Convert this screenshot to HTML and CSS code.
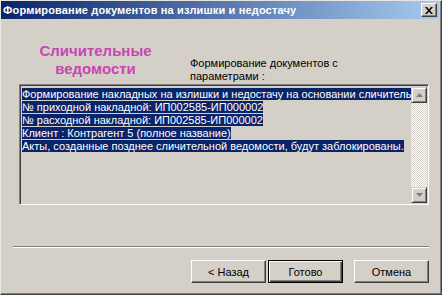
FILE: index.html
```html
<!DOCTYPE html>
<html lang="ru">
<head>
    <meta charset="UTF-8">
    <title>Формирование документов на излишки и недостачу</title>
    <link rel="stylesheet" href="styles.css">
</head>
<body>
    <div class="window">
        <!-- Title bar -->
        <div class="titlebar">
            <span class="title">Формирование документов на излишки и недостачу</span>
            <button class="close-btn">
                <svg width="8" height="7" viewBox="0 0 8 7"><path d="M0 0h2l2 2.5L6 0h2L5 3.5 8 7H6L4 4.5 2 7H0l3-3.5z" fill="#000"/></svg>
            </button>
        </div>

        <div class="content">
            <div class="header">
                <div class="page-title">Сличительные<br>ведомости</div>
                <div class="page-desc">Формирование документов с<br>параметрами :</div>
            </div>

            <div class="listbox">
                <div class="list-text">
                    <div class="row"><span>Формирование накладных на излишки и недостачу на основании сличительной ведомости</span></div>
                    <div class="row"><span>№ приходной накладной: ИП002585-ИП000002</span></div>
                    <div class="row"><span>№ расходной накладной: ИП002585-ИП000002</span></div>
                    <div class="row"><span>Клиент : Контрагент 5 (полное название)</span></div>
                    <div class="row"><span>Акты, созданные позднее сличительной ведомости, будут заблокированы.</span></div>
                </div>
                <div class="scrollbar">
                    <div class="sb-btn"><svg width="7" height="4" viewBox="0 0 7 4"><path d="M3.5 0L7 4H0z" fill="#808080"/></svg></div>
                    <div class="sb-track"></div>
                    <div class="sb-btn"><svg width="7" height="4" viewBox="0 0 7 4"><path d="M0 0h7L3.5 4z" fill="#808080"/></svg></div>
                </div>
            </div>

            <div class="separator"></div>

            <div class="buttons">
                <button class="btn">&lt; Назад</button>
                <button class="btn btn-default">Готово</button>
                <button class="btn btn-cancel">Отмена</button>
            </div>
        </div>
    </div>
</body>
</html>
```

FILE: styles.css
```css
body {
    margin: 0;
    font-family: "Liberation Sans", Arial, sans-serif;
    font-size: 11px;
    background: #d4d0c8;
}
.window {
    width: 442px;
    height: 295px;
    box-sizing: border-box;
    background: #d4d0c8;
    border-top: 1px solid #e8e6e0;
    border-left: 1px solid #e8e6e0;
    border-right: 1px solid #404040;
    border-bottom: 1px solid #404040;
    box-shadow: inset -1px -1px #808080;
    padding: 0 2px 2px 0;
    display: flex;
    flex-direction: column;
}
.titlebar {
    height: 18px;
    background: linear-gradient(to right, #0a246a, #a6caf0);
    display: flex;
    align-items: center;
    justify-content: space-between;
    padding: 0 2px 0 2px;
}
.title {
    color: #fff;
    font-weight: bold;
    font-size: 11px;
    letter-spacing: 0.15px;
}
.close-btn {
    width: 16px;
    height: 14px;
    padding: 0;
    background: #d4d0c8;
    border: 1px solid;
    border-color: #fff #404040 #404040 #fff;
    box-shadow: inset -1px -1px #808080;
    display: flex;
    align-items: center;
    justify-content: center;
}
.content {
    flex: 1;
    display: flex;
    flex-direction: column;
}
.header {
    display: flex;
    height: 65px;
}
.page-title {
    width: 189px;
    padding-top: 23px;
    text-align: center;
    color: #c846b4;
    font-weight: bold;
    font-size: 15px;
    line-height: 18px;
}
.page-desc {
    padding-top: 38px;
    line-height: 13px;
}
.listbox {
    margin-left: 18px;
    width: 410px;
    height: 121px;
    box-sizing: border-box;
    border: 1px solid;
    border-color: #808080 #fff #fff #808080;
    box-shadow: inset 1px 1px #404040;
    padding: 2px 1px 1px 2px;
    display: flex;
}
.list-text {
    flex: 1;
    overflow: hidden;
    white-space: nowrap;
    padding-top: 1px;
}
.row {
    height: 13px;
    line-height: 13px;
}
.row span {
    background: #0a246a;
    color: #fff;
}
.scrollbar {
    width: 16px;
    display: flex;
    flex-direction: column;
}
.sb-btn {
    height: 16px;
    box-sizing: border-box;
    background: #d4d0c8;
    border: 1px solid;
    border-color: #d4d0c8 #404040 #404040 #d4d0c8;
    box-shadow: inset 1px 1px #fff, inset -1px -1px #808080;
    display: flex;
    align-items: center;
    justify-content: center;
}
.sb-track {
    flex: 1;
    background: repeating-conic-gradient(#fff 0 25%, #d4d0c8 0 50%) 0 0 / 2px 2px;
}
.separator {
    margin: 41px 10px 0 12px;
    height: 1px;
    background: #808080;
    border-bottom: 1px solid #fff;
}
.buttons {
    display: flex;
    justify-content: flex-end;
    padding: 12px 10px 0 0;
    gap: 2px;
}
.btn {
    width: 75px;
    height: 23px;
    box-sizing: border-box;
    font-family: "Liberation Sans", Arial, sans-serif;
    font-size: 11px;
    background: #d4d0c8;
    color: #000;
    border: 1px solid;
    border-color: #fff #404040 #404040 #fff;
    box-shadow: inset -1px -1px #808080;
    padding: 0;
}
.btn-default {
    border: 1px solid #000;
    box-shadow: inset 1px 1px #fff, inset -1px -1px #404040, inset -2px -2px #808080;
}
.btn-cancel {
    margin-left: 9px;
}
```
